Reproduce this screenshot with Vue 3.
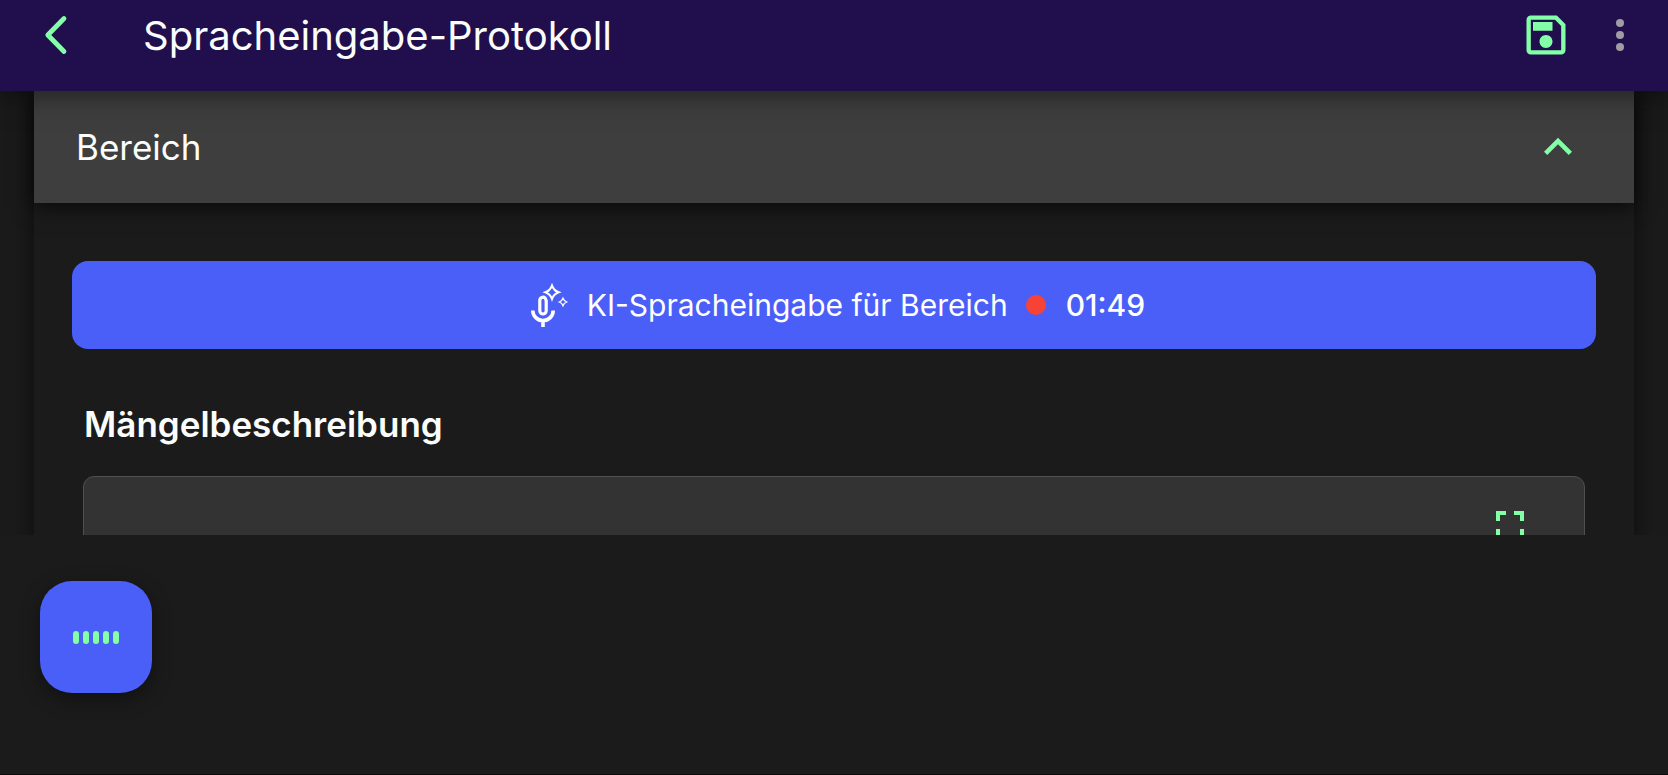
<template>
  <div class="page">
    <header class="topbar">
      <button class="icon-btn topbar__back" type="button" aria-label="Zurück">
        <svg width="24" height="42" viewBox="0 0 24 42"><path d="M20 4.5L3.8 21L20 37.5" fill="none" stroke="#83ffa7" stroke-width="4.8" stroke-linecap="round" stroke-linejoin="round"/></svg>
      </button>
      <h1 class="topbar__title">Spracheingabe-Protokoll</h1>
      <button class="icon-btn" type="button" aria-label="Speichern">
        <svg width="52" height="52" viewBox="0 0 24 24"><path fill="#83ffa7" d="M17 3H5c-1.11 0-2 .9-2 2v14c0 1.1.89 2 2 2h14c1.1 0 2-.9 2-2V7l-4-4zm2 16H5V5h11.17L19 7.83V19zm-7-7c-1.66 0-3 1.34-3 3s1.34 3 3 3 3-1.34 3-3-1.34-3-3-3zM6 6h9v4H6z"/></svg>
      </button>
      <button class="icon-btn topbar__more" type="button" aria-label="Mehr">
        <svg width="48" height="48" viewBox="0 0 24 24" fill="#a09ca4"><circle cx="12" cy="6" r="2"/><circle cx="12" cy="12" r="2"/><circle cx="12" cy="18" r="2"/></svg>
      </button>
    </header>

    <main class="content">
      <section class="panel">
        <button class="panel__header" type="button" :aria-expanded="open" @click="open = !open">
          <span>Bereich</span>
          <svg class="panel__arrow" :class="{ 'panel__arrow--closed': !open }" width="56" height="56" viewBox="0 0 24 24"><path fill="#83ffa7" d="M12 8l-6 6 1.41 1.41L12 10.83l4.59 4.58L18 14z"/></svg>
        </button>
        <div v-if="open" class="panel__body">
          <button class="voice" type="button">
            <svg class="voice__icon" width="38" height="44" viewBox="0 0 38 44" fill="none" stroke="#fff">
              <path d="M15.2 19V27.8a3.2 3.2 0 0 1-6.4 0V17.4a3.2 3.2 0 0 1 5.4-2.3l1 2.4z" stroke-width="3.2"/>
              <path d="M1.8 27.4a10.2 10.2 0 0 0 20.4 0M12 37.6V44" stroke-width="3.6"/>
              <path d="M21 2.6Q22.8 7.5 27.7 9.3Q22.8 11.1 21 16Q19.2 11.1 14.3 9.3Q19.2 7.5 21 2.6z" stroke-width="2.1"/>
              <path d="M32 15.3Q33 18 35.7 19Q33 20 32 22.7Q31 20 28.3 19Q31 18 32 15.3z" stroke-width="1.3"/>
            </svg>
            <span class="voice__label">KI-Spracheingabe für Bereich</span>
            <span class="voice__dot"></span>
            <span class="voice__time">{{ time }}</span>
          </button>
          <label class="field-label" for="defects">Mängelbeschreibung</label>
          <div class="field">
            <textarea id="defects" v-model="defects" class="field__input"></textarea>
            <button class="icon-btn" type="button" aria-label="Vollbild">
              <svg width="48" height="48" viewBox="0 0 24 24"><path fill="#83ffa7" d="M7 14H5v5h5v-2H7v-3zm-2-4h2V7h3V5H5v5zm12 7h-3v2h5v-5h-2v3zM14 5v2h3v3h2V5h-5z"/></svg>
            </button>
          </div>
        </div>
      </section>
    </main>

    <footer class="bottom">
      <button class="fab" type="button" aria-label="Aufnahme">
        <span v-for="n in 5" :key="n" class="fab__bar"></span>
      </button>
    </footer>
  </div>
</template>

<script setup>
import { computed, ref } from 'vue'

const open = ref(true)
const defects = ref('')
const seconds = ref(109)

const time = computed(() => {
  const m = String(Math.floor(seconds.value / 60)).padStart(2, '0')
  const s = String(seconds.value % 60).padStart(2, '0')
  return `${m}:${s}`
})
</script>

<style>
body {
  margin: 0;
  background: #1b1b1b;
}
</style>

<style scoped>
.page {
  height: 100vh;
  display: flex;
  flex-direction: column;
  box-sizing: border-box;
  border-bottom: 1px solid #0c0c0c;
  background: #1b1b1b;
  color: #fafdfb;
  font-family: Inter, 'Liberation Sans', sans-serif;
}
button {
  border: none;
  color: inherit;
  font: inherit;
  cursor: pointer;
}
.icon-btn {
  display: flex;
  padding: 0;
  background: none;
}
.topbar {
  position: relative;
  z-index: 1;
  flex: none;
  display: flex;
  align-items: center;
  padding: 0 24px 21px 44px;
  height: 70px;
  background: #200f4c;
  box-shadow: 0 4px 24px rgba(0, 0, 0, 0.5);
}
.topbar__title {
  flex: 1;
  margin: 0 0 0 75px;
  padding-top: 2px;
  font-size: 40px;
  line-height: 48px;
  font-weight: 400;
}
.topbar__more {
  margin-left: 24px;
}
.content {
  flex: 1;
  min-height: 0;
  overflow: hidden;
  padding: 0 34px;
}
.panel {
  min-height: 640px;
  box-shadow: 0 0 24px rgba(0, 0, 0, 0.55);
  background: #1b1b1b;
}
.panel__header {
  display: flex;
  justify-content: space-between;
  align-items: center;
  width: 100%;
  height: 112px;
  padding: 0 48px 0 42px;
  background: #3e3e3e;
  box-shadow: 0 4px 20px rgba(0, 0, 0, 0.7);
  font-size: 35px;
}
.panel__arrow--closed {
  transform: rotate(180deg);
}
.panel__body {
  padding: 58px 38px;
}
.voice {
  display: flex;
  justify-content: center;
  align-items: center;
  width: 100%;
  height: 88px;
  padding: 0 0 0 8px;
  border-radius: 16px;
  background: #4a5ef8;
  color: #fff;
  font-size: 30px;
}
.voice__label {
  margin-left: 18px;
}
.voice__dot {
  width: 20px;
  height: 20px;
  margin: 0 20px 0 18px;
  border-radius: 50%;
  background: #f74336;
}
.voice__time {
  font-weight: 500;
}
.field-label {
  display: block;
  margin: 55px 12px 32px;
  font-size: 35px;
  line-height: 40px;
  font-weight: 600;
}
.field {
  display: flex;
  align-items: flex-start;
  margin: 0 11px;
  padding: 24px 50px 24px 24px;
  border: 1px solid #505050;
  border-radius: 11px;
  background: #333;
}
.field__input {
  flex: 1;
  height: 160px;
  padding: 0;
  border: none;
  outline: none;
  resize: none;
  background: none;
  color: inherit;
  font: inherit;
  font-size: 35px;
}
.bottom {
  flex: none;
  padding: 46px 40px 81px;
}
.fab {
  display: flex;
  justify-content: center;
  align-items: center;
  gap: 4px;
  width: 112px;
  height: 112px;
  padding: 0;
  border-radius: 32px;
  background: #4a5ef8;
  box-shadow: 0 6px 20px rgba(0, 0, 0, 0.4);
}
.fab__bar {
  width: 6px;
  height: 13px;
  border-radius: 3px;
  background: #83ffa7;
}
</style>
